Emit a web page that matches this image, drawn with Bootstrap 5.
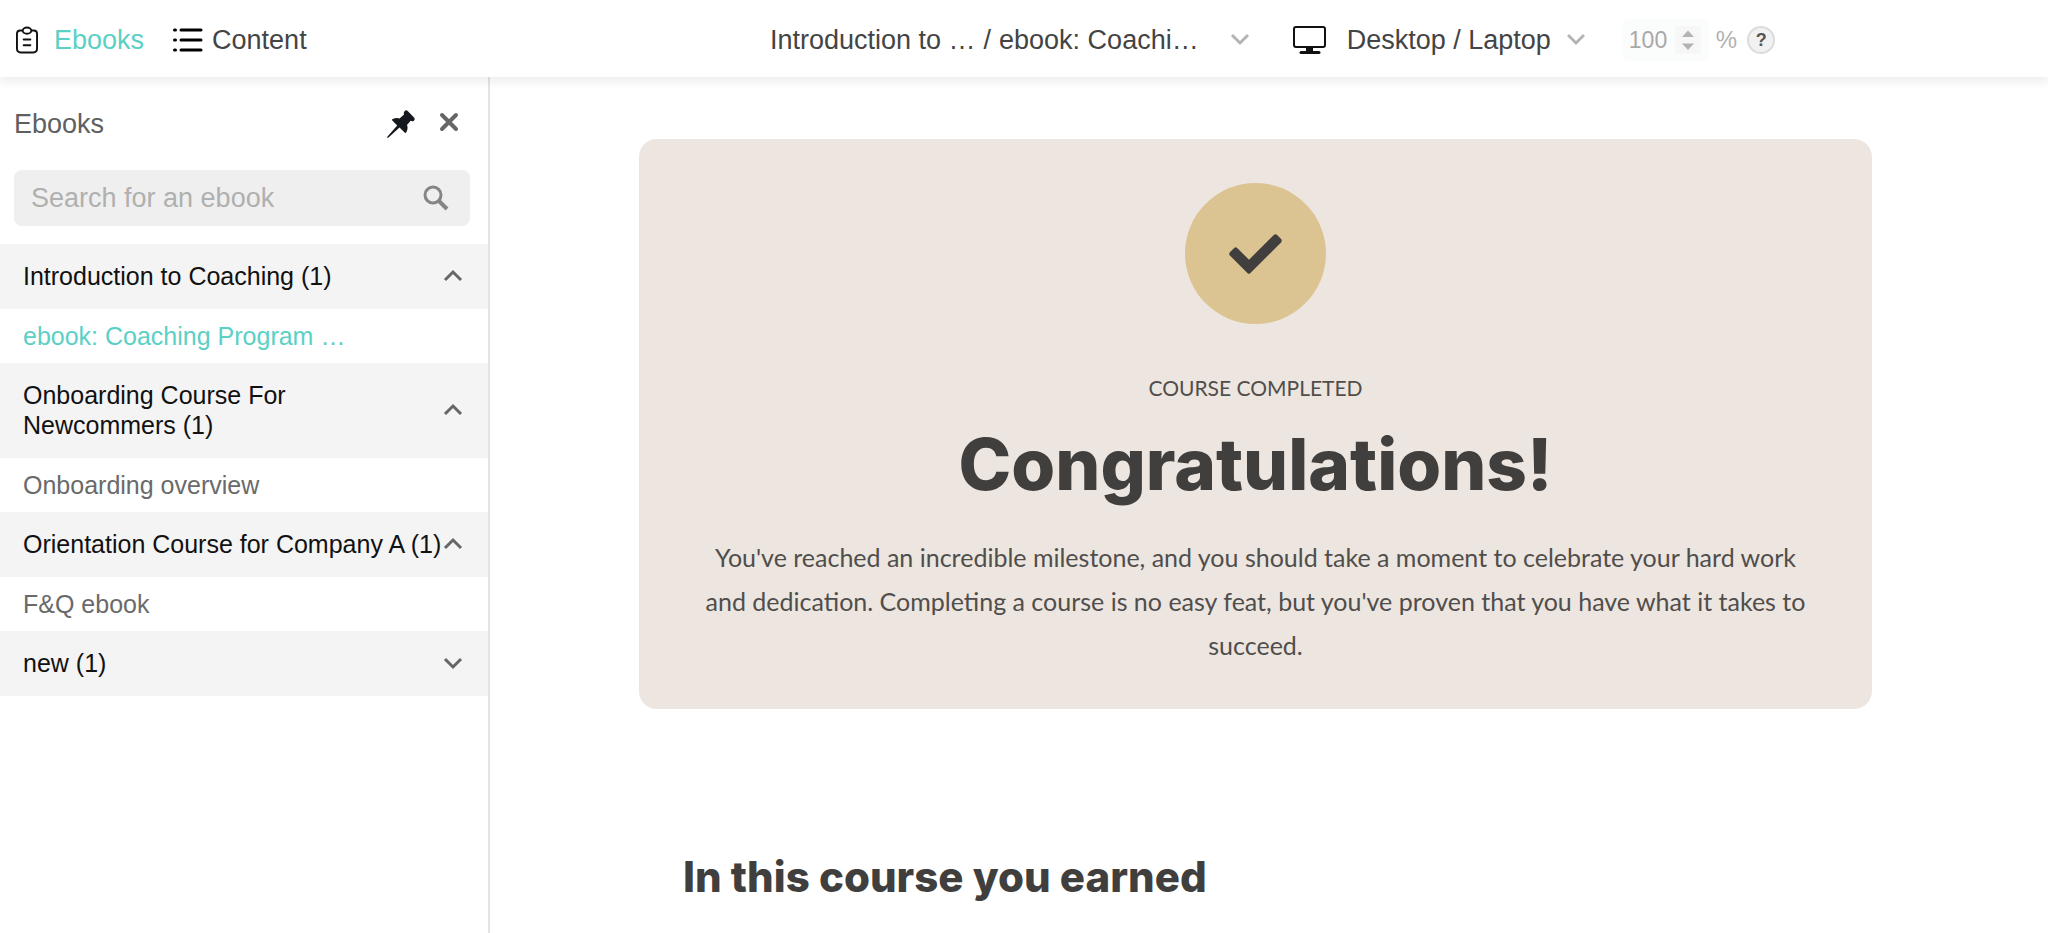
<!DOCTYPE html>
<html lang="en">
<head>
<meta charset="utf-8">
<meta name="viewport" content="width=device-width, initial-scale=1">
<title>Ebooks</title>
<link href="https://cdn.jsdelivr.net/npm/bootstrap@5.3.0/dist/css/bootstrap.min.css" rel="stylesheet">
<style>
  body { font-family: "Liberation Sans", Arial, sans-serif; color: #444; background: #fff; }
  svg { display: block; flex-shrink: 0; }
  button { color: inherit; }
  .topbar { height: 77px; font-size: 27px; line-height: 32px; padding: 2px 16px 0; box-shadow: 0 4px 10px 1px rgba(0, 0, 0, .07); z-index: 2; }
  .topbar-nav { width: 37%; gap: 28px; }
  .topbar a { color: #444; }
  .topbar a.current, .ebook-link.current { color: #5bd0c5; }
  .plain-btn { background: none; border: 0; padding: 0; }
  .zoom-box { width: 87px; height: 42px; background: #fbfcfc; border-radius: 8px; padding: 0 6px 0 7px; margin: 0 7px 0 37px; }
  .zoom-box input { width: 46px; border: 0; padding: 0; background: none; color: #a9a9a9; font-size: 23px; appearance: textfield; -moz-appearance: textfield; }
  .zoom-box input::-webkit-inner-spin-button { -webkit-appearance: none; margin: 0; }
  .percent { color: #b2b2b2; font-size: 24px; }
  .help-btn { width: 28px; height: 28px; border: 2px solid #dcdcdc; border-radius: 50%; background: #f1f1f1; color: #555; font-size: 18px; line-height: 24px; font-weight: 700; padding: 0; margin-left: 10px; }
  .sidebar { width: 490px; border-right: 2px solid #e4e4e4; }
  .sidebar-head { padding: 30px 29px 0 14px; color: #5f5f5f; }
  .sidebar-head h1 { font-size: 27px; line-height: 34px; }
  .search-box { margin: 29px 18px 18px 14px; height: 56px; border-radius: 8px; background: #efefef; padding: 0 21px 0 17px; }
  .search-box input { border: 0; background: none; padding: 0; font-size: 27px; color: #444; }
  .search-box input::placeholder { color: #b0b0b0; }
  .search-box input:focus, .zoom-box input:focus { outline: 0; }
  .group-btn { background: #f4f4f4; border: 0; padding: 17px 25px 18px 23px; font-size: 25px; line-height: 30px; color: #111; }
  .group-btn span { width: 416px; }
  .group-btn .short { width: 300px; }
  .ebook-link { font-size: 25px; line-height: 30px; padding: 12px 23px; color: #6a6a6a; }
  .stage { padding: 62px 27px 0 0; }
  .page-col { max-width: 1233px; }
  .course-card { background: #ede5df; border-radius: 18px; padding: 44px 56px 42px; color: #403f3d; }
  .seal { width: 141px; height: 141px; border-radius: 50%; background: #dcc492; }
  .eyebrow { font-family: Lato, sans-serif; font-size: 21px; line-height: 30px; margin: 49px 0 20px; color: #504e4c; }
  .headline { font-family: Inter, sans-serif; font-weight: 800; font-size: 71px; line-height: 82px; margin-bottom: 30px; }
  .lede { font-family: Lato, sans-serif; font-size: 25px; line-height: 44px; color: #504e4c; }
  .earned { font-family: Inter, sans-serif; font-weight: 800; font-size: 42px; line-height: 52px; padding: 142px 44px 0; color: #403f3d; }
</style>
</head>
<body class="d-flex flex-column min-vh-100">
<header class="topbar bg-white d-flex align-items-center position-relative">
  <nav class="topbar-nav d-flex align-items-center flex-shrink-0" aria-label="Panels">
    <a href="#ebooks" class="current d-flex align-items-center text-decoration-none">
      <svg class="me-3" width="22" height="28" viewBox="0 0 23 28" fill="none" stroke="#111" stroke-width="2" stroke-linecap="round"><path d="M6 4H4.500Q1 4 1 7.500v15.500Q1 27 5 27h13q4 0 4-4V7.500Q22 4 18.500 4H17"/><ellipse cx="11.500" cy="4.200" rx="4.500" ry="3.200"/><path d="M8 13.500h7M8 19.500h7"/></svg>
      Ebooks</a>
    <a href="#content" class="d-flex align-items-center text-decoration-none">
      <svg class="me-2" width="32" height="26" viewBox="0 0 32 26" fill="none" stroke="#000" stroke-width="3" stroke-linecap="round"><path d="M9 3h20M9 13h20M9 23h20M2.500 3h1M2.500 13h1M2.500 23h1"/></svg>
      Content</a>
  </nav>
  <button type="button" class="plain-btn d-flex align-items-center text-nowrap ms-2">
    <span>Introduction to …</span><span class="ps-2">/</span><span class="ps-2">ebook: Coachi…</span>
    <svg class="ms-4" width="38" height="14" viewBox="0 0 38 14" fill="none" stroke="#b5b5b5" stroke-width="3"><path d="M9 2l8 8 8-8"/></svg>
  </button>
  <button type="button" class="plain-btn d-flex align-items-center text-nowrap ms-4">
    <svg class="ms-2 me-3" width="34" height="28" viewBox="0 0 34 28" fill="none" stroke="#111"><rect x="1" y="1" width="31" height="20" rx="2" stroke-width="2"/><path d="M13 22h7v3h-7z" fill="#111" stroke="none"/><path d="M8 26.500h18" stroke-width="3" stroke-linecap="round"/></svg>
    <span class="ps-1">Desktop / Laptop</span>
    <svg class="ms-3" width="18" height="14" viewBox="0 0 18 14" fill="none" stroke="#b5b5b5" stroke-width="3"><path d="M1 2l8 8 8-8"/></svg>
  </button>
  <div class="zoom-box d-flex align-items-center">
    <input type="number" value="100" aria-label="Zoom percent">
    <svg width="26" height="28" viewBox="0 0 26 28"><path d="M0 0h26v28H0z" fill="#f7f7f7"/><path d="M7 11l6-6.500 6 6.500zM7 17.500l6 6.500 6-6.500z" fill="#b4b4b4"/></svg>
  </div>
  <span class="percent">%</span>
  <button type="button" class="help-btn">?</button>
</header>

<div class="d-flex flex-grow-1">
  <aside class="sidebar flex-shrink-0">
    <div class="sidebar-head d-flex align-items-center">
      <h1 class="fw-normal m-0 me-auto">Ebooks</h1>
      <button type="button" class="plain-btn" aria-label="Pin panel">
        <svg width="28" height="28" viewBox="0 0 28 28" fill="#15191d"><path d="M17.500 1.200Q19-.5 20.700 1l6.300 6.600q1.500 2-.3 3.300-1.300.8-3-.1L20 15q1.500 3.500-.8 7.500-.8.900-1.600 0l-5.100-5L1.500 27.600 0 28l.5-1.500L10.200 15.500 5.300 10.600q-.8-1 .3-1.600 3.900-1.600 7-.6l4.400-4q-.5-2 .5-3.200z"/></svg>
      </button>
      <button type="button" class="plain-btn ms-4 pb-1" aria-label="Close panel">
        <svg width="20" height="20" viewBox="0 0 20 20" fill="none" stroke="#666" stroke-width="4" stroke-linecap="round"><path d="M3 3l14 14M17 3L3 17"/></svg>
      </button>
    </div>
    <div class="search-box d-flex align-items-center">
      <input type="search" class="flex-grow-1" placeholder="Search for an ebook" aria-label="Search for an ebook">
      <svg width="26" height="26" viewBox="0 0 26 26" fill="none" stroke="#858585"><circle cx="10" cy="10" r="8" stroke-width="3"/><path d="M16 16l8 8" stroke-width="4"/></svg>
    </div>
    <button type="button" class="group-btn d-flex align-items-center w-100 text-start">
      <span class="me-auto">Introduction to Coaching (1)</span>
      <svg width="20" height="14" viewBox="0 0 20 14" fill="none" stroke="#666" stroke-width="3"><path d="M2 11l8-8 8 8"/></svg>
    </button>
    <a href="#coaching" class="ebook-link current d-block text-decoration-none">ebook: Coaching Program …</a>
    <button type="button" class="group-btn d-flex align-items-center w-100 text-start">
      <span class="short me-auto">Onboarding Course For Newcommers (1)</span>
      <svg width="20" height="14" viewBox="0 0 20 14" fill="none" stroke="#666" stroke-width="3"><path d="M2 11l8-8 8 8"/></svg>
    </button>
    <a href="#onboarding" class="ebook-link d-block text-decoration-none">Onboarding overview</a>
    <button type="button" class="group-btn d-flex align-items-center w-100 text-start">
      <span class="me-auto text-nowrap">Orientation Course for Company A (1)</span>
      <svg width="20" height="14" viewBox="0 0 20 14" fill="none" stroke="#666" stroke-width="3"><path d="M2 11l8-8 8 8"/></svg>
    </button>
    <a href="#faq" class="ebook-link d-block text-decoration-none">F&amp;Q ebook</a>
    <button type="button" class="group-btn d-flex align-items-center w-100 text-start">
      <span class="me-auto">new (1)</span>
      <svg width="20" height="14" viewBox="0 0 20 14" fill="none" stroke="#666" stroke-width="3"><path d="M2 3l8 8 8-8"/></svg>
    </button>
  </aside>
  <main class="stage flex-grow-1">
    <div class="page-col mx-auto">
      <section class="course-card text-center">
        <div class="seal mx-auto d-flex align-items-center justify-content-center">
          <svg width="53" height="40" viewBox="0 0 53 40" fill="#403f3d"><path d="M.9 21.500Q-.6 20 .9 18.200L5.200 14Q6.700 12.700 8.200 14L20 25.700 45 .7Q46.400-.4 47.900.8L52.100 5Q53.400 6.700 52.100 8.400L21.200 39.300Q20 40.400 18.600 39.300z"/></svg>
        </div>
        <p class="eyebrow">COURSE COMPLETED</p>
        <h2 class="headline">Congratulations!</h2>
        <p class="lede m-0">You've reached an incredible milestone, and you should take a moment to celebrate your hard work and dedication. Completing a course is no easy feat, but you've proven that you have what it takes to succeed.</p>
      </section>
      <h3 class="earned m-0">In this course you earned</h3>
    </div>
  </main>
</div>
<script src="https://cdn.jsdelivr.net/npm/bootstrap@5.3.0/dist/js/bootstrap.bundle.min.js"></script>
</body>
</html>
